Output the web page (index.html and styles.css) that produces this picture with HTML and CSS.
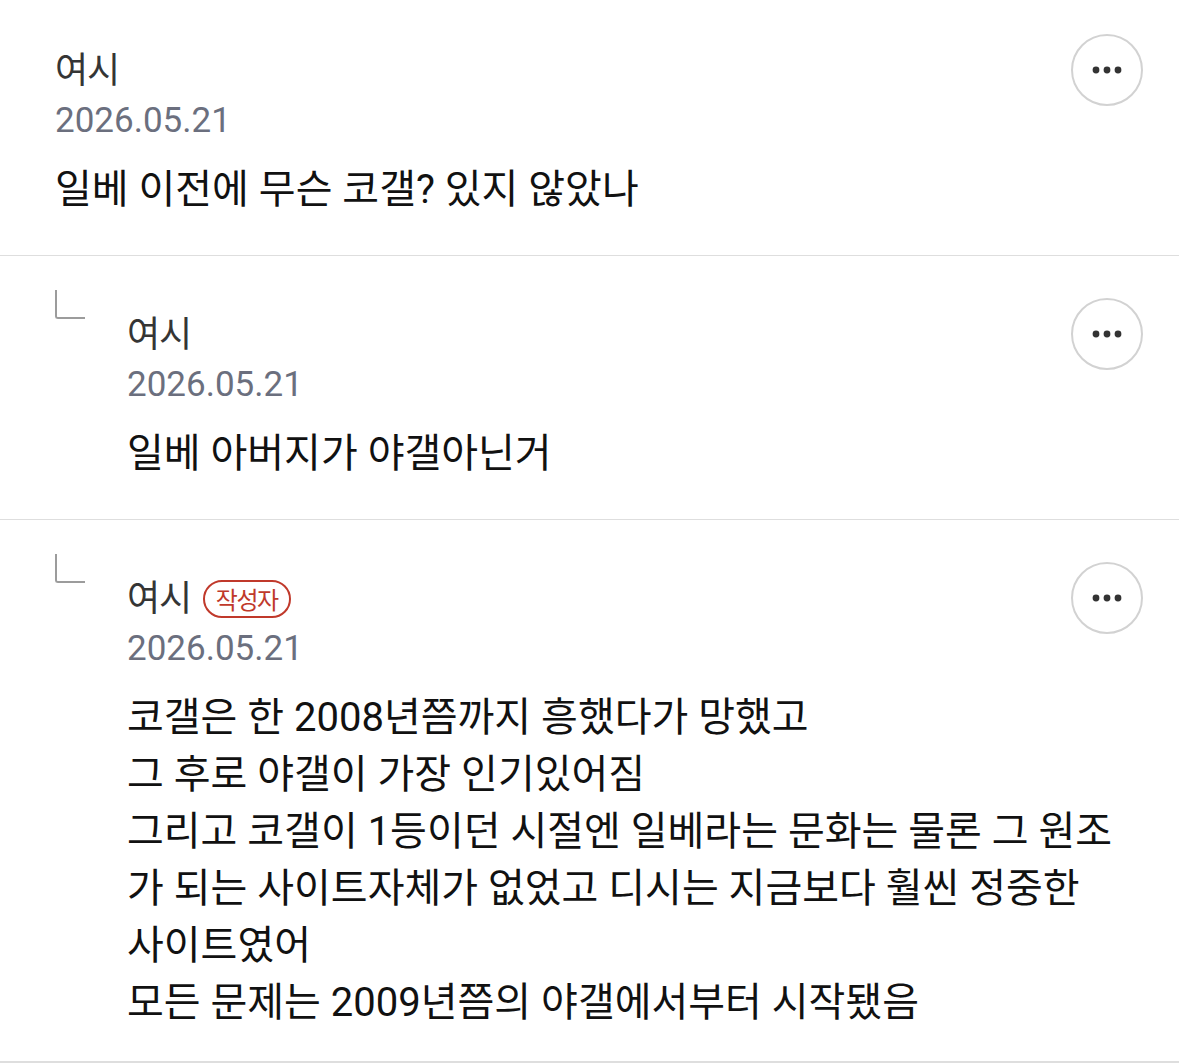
FILE: index.html
```html
<!DOCTYPE html>
<html lang="ko">
<head>
<meta charset="utf-8">
<title>댓글</title>
<link rel="stylesheet" href="styles.css">
</head>
<body>
<div class="comments">
  <div class="comment">
    <div class="main">
      <div class="header">
        <div class="meta">
          <div class="name">여시</div>
          <div class="date">2026.05.21</div>
        </div>
        <button class="more" aria-label="더보기">
          <svg width="30" height="8" viewBox="0 0 30 8"><circle cx="4" cy="4" r="3.4"/><circle cx="15" cy="4" r="3.4"/><circle cx="26" cy="4" r="3.4"/></svg>
        </button>
      </div>
      <div class="content">일베 이전에 무슨 코갤? 있지 않았나</div>
    </div>
  </div>

  <div class="comment reply">
    <div class="reply-icon"><span class="ell"></span></div>
    <div class="main">
      <div class="header">
        <div class="meta">
          <div class="name">여시</div>
          <div class="date">2026.05.21</div>
        </div>
        <button class="more" aria-label="더보기">
          <svg width="30" height="8" viewBox="0 0 30 8"><circle cx="4" cy="4" r="3.4"/><circle cx="15" cy="4" r="3.4"/><circle cx="26" cy="4" r="3.4"/></svg>
        </button>
      </div>
      <div class="content">일베 아버지가 야갤아닌거</div>
    </div>
  </div>

  <div class="comment reply">
    <div class="reply-icon"><span class="ell"></span></div>
    <div class="main">
      <div class="header">
        <div class="meta">
          <div class="name">여시 <span class="badge">작성자</span></div>
          <div class="date">2026.05.21</div>
        </div>
        <button class="more" aria-label="더보기">
          <svg width="30" height="8" viewBox="0 0 30 8"><circle cx="4" cy="4" r="3.4"/><circle cx="15" cy="4" r="3.4"/><circle cx="26" cy="4" r="3.4"/></svg>
        </button>
      </div>
      <div class="content">코갤은 한 2008년쯤까지 흥했다가 망했고<br>그 후로 야갤이 가장 인기있어짐<br>그리고 코갤이 1등이던 시절엔 일베라는 문화는 물론 그 원조가 되는 사이트자체가 없었고 디시는 지금보다 훨씬 정중한 사이트였어<br>모든 문제는 2009년쯤의 야갤에서부터 시작됐음</div>
    </div>
  </div>
</div>
</body>
</html>
```

FILE: styles.css
```css
* { box-sizing: border-box; }
html, body {
  margin: 0;
  padding: 0;
  background: #ffffff;
}
body {
  font-family: Roboto, "Noto Sans CJK KR", sans-serif;
  color: #111111;
}
.comments {
  display: flex;
  flex-direction: column;
}
.comment {
  display: flex;
  padding: 26px 36px 37px 55px;
  border-bottom: 1px solid #dedede;
}
.comment.reply {
  padding-top: 34px;
}
.comment:last-child {
  padding-bottom: 30px;
  border-bottom-width: 2px;
}
.reply-icon {
  flex: 0 0 72px;
  display: flex;
  align-items: flex-start;
}
.ell {
  display: block;
  width: 30px;
  height: 29px;
  border-left: 2.5px solid #9c9c9c;
  border-bottom: 2.5px solid #9c9c9c;
  border-bottom-left-radius: 3px;
}
.main {
  flex: 1;
  min-width: 0;
  padding-top: 8px;
}
.header {
  display: flex;
  justify-content: space-between;
  align-items: flex-start;
}
.meta {
  padding-top: 12px;
}
.name {
  font-size: 36px;
  line-height: 50px;
  color: #353535;
  letter-spacing: -1.2px;
  display: flex;
  align-items: center;
  gap: 12px;
}
.date {
  font-size: 35px;
  line-height: 50px;
  color: #6b6f7e;
  letter-spacing: 0;
}
.badge {
  display: inline-flex;
  align-items: center;
  justify-content: center;
  height: 38px;
  padding: 0 11px;
  border: 2px solid #c0392b;
  border-radius: 20px;
  color: #c0392b;
  font-size: 24px;
  letter-spacing: -1.5px;
  line-height: 1;
  font-family: "Noto Sans CJK KR", sans-serif;
}
.more {
  flex: 0 0 72px;
  width: 72px;
  height: 72px;
  border-radius: 50%;
  border: 2px solid #d2d2d2;
  background: #ffffff;
  padding: 0;
  display: flex;
  align-items: center;
  justify-content: center;
  cursor: pointer;
}
.more svg { fill: #333333; display: block; }
.content {
  margin-top: 15px;
  margin-right: 25px;
  font-size: 40px;
  line-height: 57px;
  letter-spacing: 0;
  color: #111111;
}
```
